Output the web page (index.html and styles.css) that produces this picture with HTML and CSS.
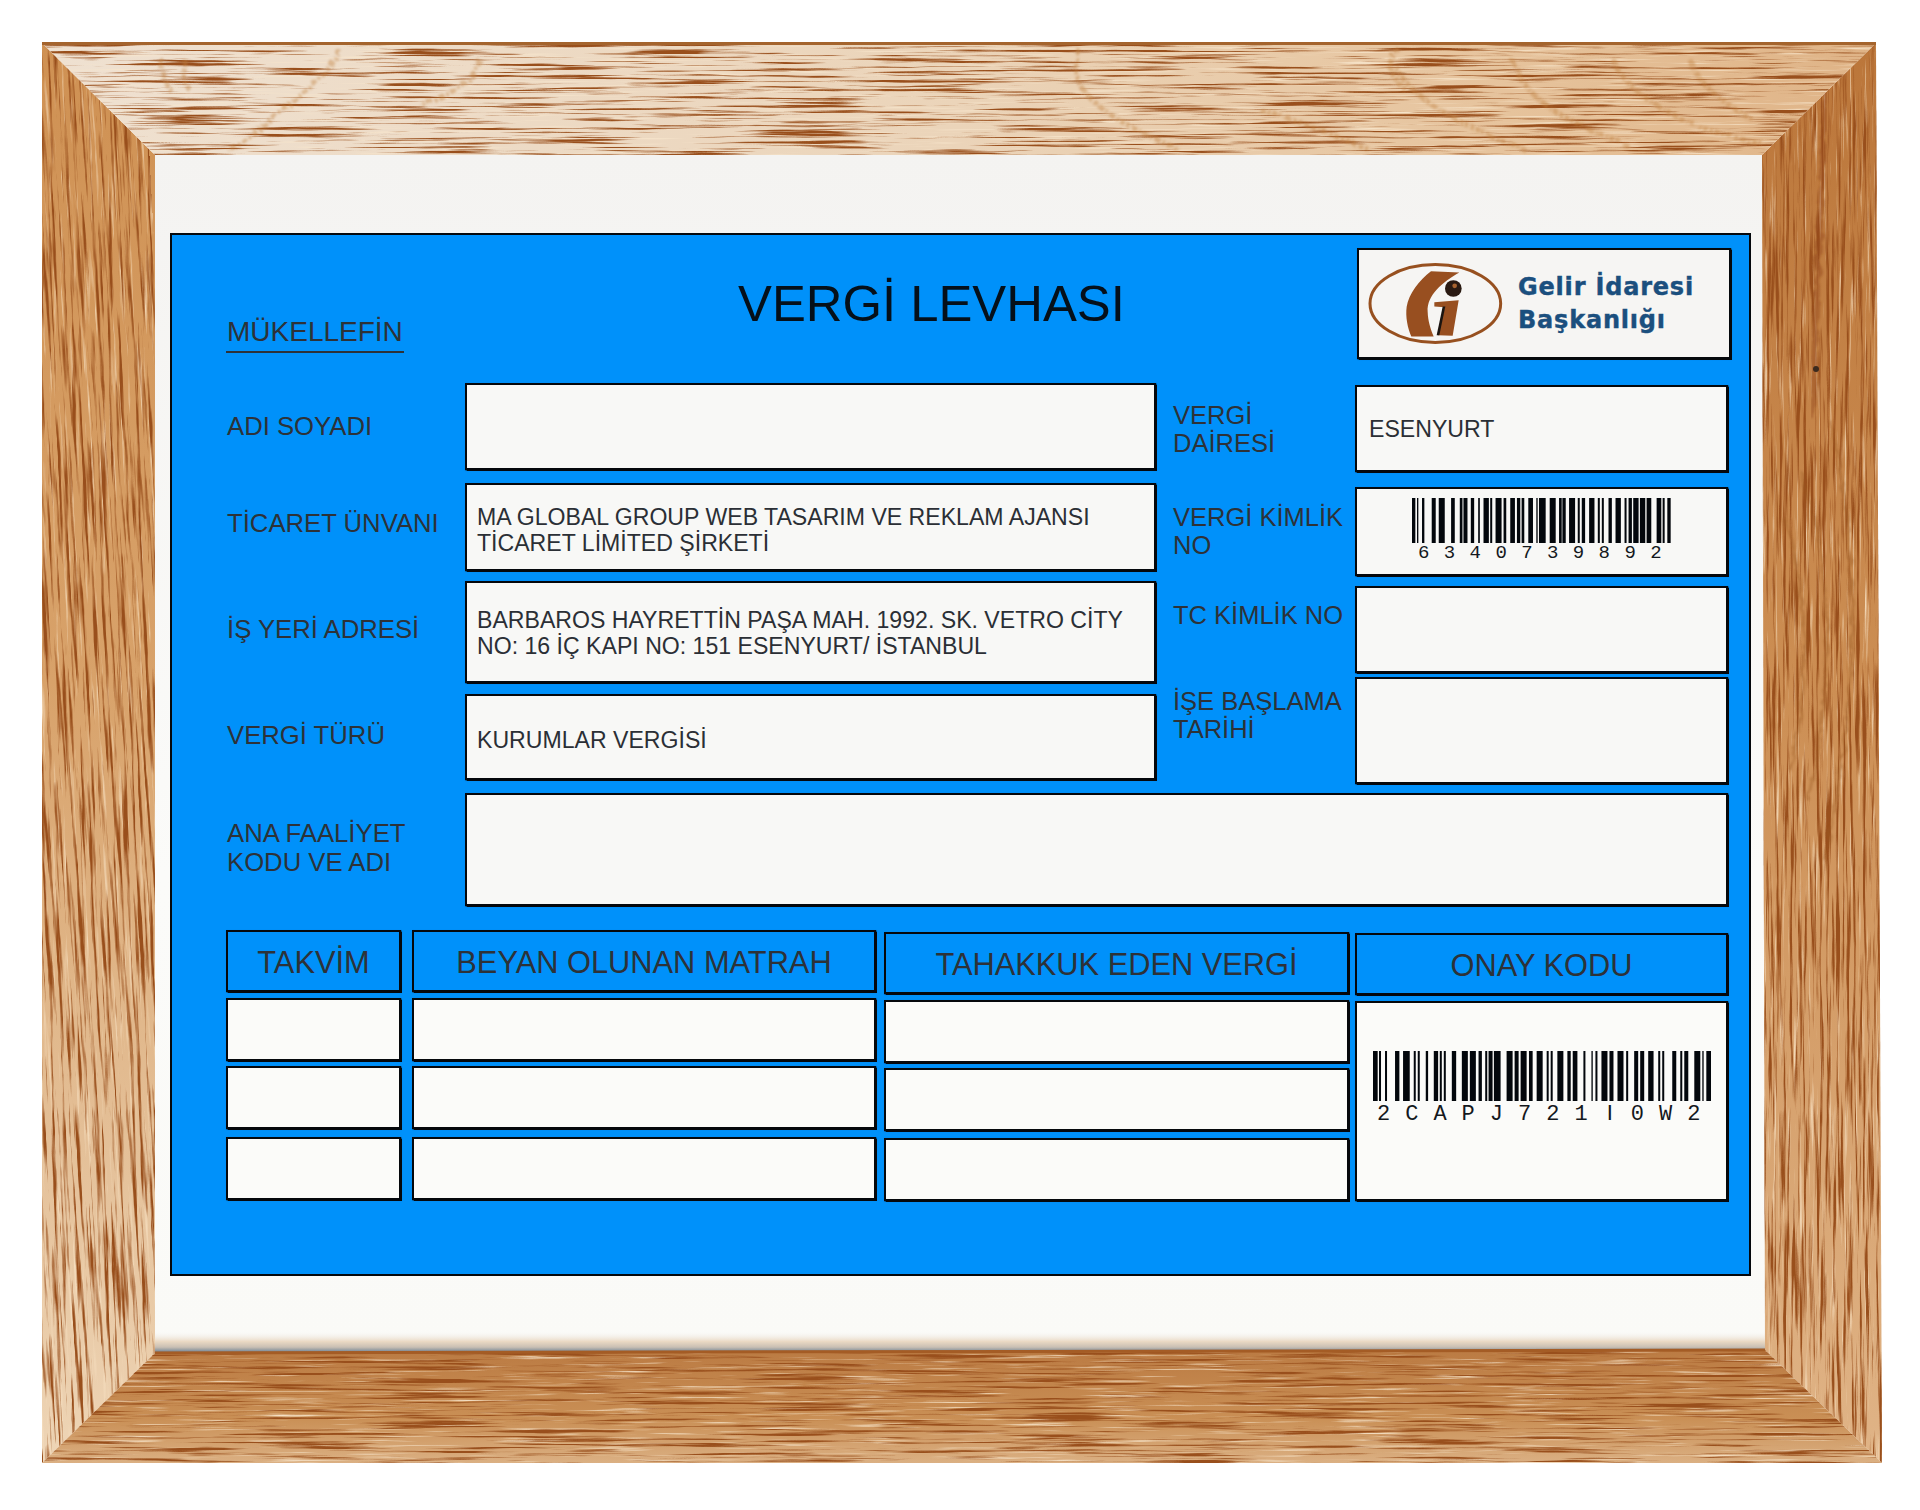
FILE: index.html
```html
<!DOCTYPE html>
<html lang="tr">
<head>
<meta charset="utf-8">
<title>Vergi Levhası</title>
<link rel="stylesheet" href="styles.css">
</head>
<body>
<div class="page">
  <div class="mat">
    <div class="panel">
      <div class="upper">
        <div class="left-col">
          <div class="left-head">
            <div class="owner">MÜKELLEFİN</div>
            <h1 class="title">VERGİ LEVHASI</h1>
          </div>
          <div class="form-row pitch-100">
            <div class="label">ADI SOYADI</div>
            <div class="box box-87"></div>
          </div>
          <div class="form-row pitch-98">
            <div class="label label-up">TİCARET ÜNVANI</div>
            <div class="box box-88 text-low">MA GLOBAL GROUP WEB TASARIM VE REKLAM AJANSI<br>TİCARET LİMİTED ŞİRKETİ</div>
          </div>
          <div class="form-row pitch-113">
            <div class="label label-tall">İŞ YERİ ADRESİ</div>
            <div class="box box-102 text-nudge">BARBAROS HAYRETTİN PAŞA MAH. 1992. SK. VETRO CİTY<br>NO: 16 İÇ KAPI NO: 151 ESENYURT/ İSTANBUL</div>
          </div>
          <div class="form-row">
            <div class="label label-mid">VERGİ TÜRÜ</div>
            <div class="box box-86 text-low">KURUMLAR VERGİSİ</div>
          </div>
        </div>
        <div class="right-col">
          <div class="logo-box">
            <svg class="logo-mark" viewBox="80 85 420 260" aria-hidden="true">
              <ellipse cx="288" cy="215" rx="196" ry="117" fill="none" stroke="#97501f" stroke-width="9"/>
              <path d="M275 118 L360 122 C310 150 262 190 265 240 C266 270 274 292 283 314 L216 314 C205 290 198 255 202 225 C208 185 240 145 275 118Z" fill="#984f20"/>
              <circle cx="342" cy="170" r="25" fill="#2a1a12"/>
              <circle cx="346" cy="162" r="7" fill="#a8632f"/>
              <path d="M285 211 L358 205 L340 312 L296 310 L316 226 L285 224Z" fill="#984f20"/>
              <path d="M310 224 L318 224 L300 310 L292 310Z" fill="#1b1410"/>
            </svg>
            <div class="logo-text">Gelir İdaresi<br>Başkanlığı</div>
          </div>
          <div class="side-row pitch-102">
            <div class="side-label">VERGİ<br>DAİRESİ</div>
            <div class="box box-87 side-box">ESENYURT</div>
          </div>
          <div class="side-row pitch-99">
            <div class="side-label">VERGİ KİMLİK NO</div>
            <div class="box box-89 barcode-box">
              <svg class="bars bars-tax" viewBox="218 0 775 135" preserveAspectRatio="none" aria-hidden="true">
                <path fill="#03070c" d="M218 0h10v135h-10zM233 0h4v135h-4zM248 0h7v135h-7zM277 0h12v135h-12zM298 0h18v135h-18zM335 0h11v135h-11zM361 0h8v135h-8zM372 0h12v135h-12zM394 0h10v135h-10zM416 0h5v135h-5zM432 0h16v135h-16zM452 0h6v135h-6zM468 0h18v135h-18zM492 0h8v135h-8zM512 0h14v135h-14zM532 0h10v135h-10zM546 0h8v135h-8zM566 0h14v135h-14zM590 0h4v135h-4zM598 0h20v135h-20zM630 0h18v135h-18zM658 0h8v135h-8zM668 0h10v135h-10zM688 0h18v135h-18zM714 0h6v135h-6zM726 0h10v135h-10zM748 0h16v135h-16zM774 0h6v135h-6zM786 0h6v135h-6zM806 0h10v135h-10zM827 0h16v135h-16zM854 0h6v135h-6zM866 0h10v135h-10zM880 0h16v135h-16zM900 0h16v135h-16zM920 0h14v135h-14zM950 0h14v135h-14zM968 0h6v135h-6zM982 0h10v135h-10z"/>
              </svg>
              <div class="code code-tax">6340739892</div>
            </div>
          </div>
          <div class="side-row pitch-91">
            <div class="side-label side-label-tight">TC KİMLİK NO</div>
            <div class="box box-87"></div>
          </div>
          <div class="side-row">
            <div class="side-label side-label-top">İŞE BAŞLAMA<br>TARİHİ</div>
            <div class="box box-107"></div>
          </div>
        </div>
      </div>
      <div class="activity">
        <div class="label label-top">ANA FAALİYET<br>KODU VE ADI</div>
        <div class="box box-wide"></div>
      </div>
      <div class="ledger">
        <div class="col col-date">
          <div class="head">TAKVİM</div>
          <div class="cells"><div class="cell"></div><div class="cell"></div><div class="cell"></div></div>
        </div>
        <div class="col col-base">
          <div class="head">BEYAN OLUNAN MATRAH</div>
          <div class="cells"><div class="cell"></div><div class="cell"></div><div class="cell"></div></div>
        </div>
        <div class="col col-tax">
          <div class="head">TAHAKKUK EDEN VERGİ</div>
          <div class="cells cells-tax"><div class="cell"></div><div class="cell"></div><div class="cell"></div></div>
        </div>
        <div class="col col-code">
          <div class="head">ONAY KODU</div>
          <div class="cell approval">
            <svg class="bars bars-approval" viewBox="100 0 1012 151" preserveAspectRatio="none" aria-hidden="true">
              <path fill="#03070c" d="M100 0h14v151h-14zM118 0h6v151h-6zM136 0h6v151h-6zM166 0h13v151h-13zM190 0h20v151h-20zM222 0h6v151h-6zM234 0h6v151h-6zM258 0h7v151h-7zM282 0h13v151h-13zM300 0h6v151h-6zM312 0h6v151h-6zM336 0h13v151h-13zM366 0h18v151h-18zM390 0h18v151h-18zM416 0h10v151h-10zM436 0h6v151h-6zM446 0h12v151h-12zM462 0h20v151h-20zM500 0h18v151h-18zM524 0h12v151h-12zM542 0h18v151h-18zM567 0h11v151h-11zM590 0h18v151h-18zM620 0h6v151h-6zM632 0h6v151h-6zM652 0h18v151h-18zM682 0h10v151h-10zM698 0h14v151h-14zM730 0h6v151h-6zM754 0h4v151h-4zM766 0h6v151h-6zM784 0h18v151h-18zM808 0h12v151h-12zM832 0h18v151h-18zM858 0h6v151h-6zM882 0h12v151h-12zM900 0h12v151h-12zM924 0h16v151h-16zM954 0h6v151h-6zM966 0h6v151h-6zM996 0h12v151h-12zM1020 0h6v151h-6zM1032 0h12v151h-12zM1062 0h18v151h-18zM1086 0h4v151h-4zM1098 0h14v151h-14z"/>
            </svg>
            <div class="code code-approval">2CAPJ721<span class="plain-i">I</span>0W2</div>
          </div>
        </div>
      </div>
    </div>
  </div>

  <svg class="wood" viewBox="0 0 1920 1510" aria-hidden="true">
    <defs>
      <filter id="grainH" x="0" y="0" width="100%" height="100%" color-interpolation-filters="sRGB">
        <feTurbulence type="fractalNoise" baseFrequency="0.008 0.36" numOctaves="4" seed="4"/>
        <feColorMatrix values="0 0 0 0 0.60  0 0 0 0 0.31  0 0 0 0 0.11  5 0 0 0 -2.6"/>
      </filter>
      <filter id="glowH" x="0" y="0" width="100%" height="100%" color-interpolation-filters="sRGB">
        <feTurbulence type="fractalNoise" baseFrequency="0.012 0.42" numOctaves="3" seed="11"/>
        <feColorMatrix values="0 0 0 0 0.97  0 0 0 0 0.90  0 0 0 0 0.80  0 3 0 0 -1.75"/>
      </filter>
      <filter id="grainV" x="0" y="0" width="100%" height="100%" color-interpolation-filters="sRGB">
        <feTurbulence type="fractalNoise" baseFrequency="0.3 0.009" numOctaves="4" seed="7"/>
        <feColorMatrix values="0 0 0 0 0.60  0 0 0 0 0.31  0 0 0 0 0.11  5 0 0 0 -2.5"/>
      </filter>
      <filter id="glowV" x="0" y="0" width="100%" height="100%" color-interpolation-filters="sRGB">
        <feTurbulence type="fractalNoise" baseFrequency="0.34 0.012" numOctaves="3" seed="19"/>
        <feColorMatrix values="0 0 0 0 0.97  0 0 0 0 0.88  0 0 0 0 0.76  0 3 0 0 -1.75"/>
      </filter>
      <filter id="wobble" x="-5%" y="-5%" width="110%" height="110%">
        <feTurbulence type="fractalNoise" baseFrequency="0.09" numOctaves="2" seed="2"/>
        <feDisplacementMap in="SourceGraphic" scale="8"/>
        <feGaussianBlur stdDeviation="0.8"/>
      </filter>
      <linearGradient id="topFill" x1="0" x2="1" y1="0" y2="0">
        <stop offset="0" stop-color="#efe1d1"/>
        <stop offset="0.5" stop-color="#ebd4b9"/>
        <stop offset="0.8" stop-color="#e6c39c"/>
        <stop offset="1" stop-color="#dfb386"/>
      </linearGradient>
      <linearGradient id="leftFill" x1="0" x2="0" y1="0" y2="1">
        <stop offset="0" stop-color="#cf9153"/>
        <stop offset="0.45" stop-color="#d8a26a"/>
        <stop offset="0.8" stop-color="#e5c29b"/>
        <stop offset="1" stop-color="#eed5b6"/>
      </linearGradient>
      <linearGradient id="rightFill" x1="0" x2="0" y1="0" y2="1">
        <stop offset="0" stop-color="#bb763a"/>
        <stop offset="0.45" stop-color="#cc8e53"/>
        <stop offset="1" stop-color="#e0b487"/>
      </linearGradient>
      <linearGradient id="bottomFill" x1="0" x2="0" y1="0" y2="1">
        <stop offset="0" stop-color="#bb7b43"/>
        <stop offset="0.6" stop-color="#c98f55"/>
        <stop offset="1" stop-color="#dbb083"/>
      </linearGradient>
      <linearGradient id="matShadow" x1="0" x2="0" y1="0" y2="1">
        <stop offset="0" stop-color="#f3f1ee" stop-opacity="0"/>
        <stop offset="0.45" stop-color="#ead9c4"/>
        <stop offset="0.72" stop-color="#c9bfb3"/>
        <stop offset="0.92" stop-color="#7f8d9a"/>
        <stop offset="1" stop-color="#9b5522"/>
      </linearGradient>
      <clipPath id="clipTop"><polygon points="42,43 1876,43 1762,155 155,155"/></clipPath>
      <clipPath id="clipLeft"><polygon points="42,43 155,155 155,1353 42,1463"/></clipPath>
      <clipPath id="clipRight"><polygon points="1876,43 1882,1463 1765,1350 1762,155"/></clipPath>
      <clipPath id="clipBottom"><polygon points="42,1463 155,1353 1765,1350 1882,1463"/></clipPath>
    </defs>

    <rect x="155" y="1332" width="1610" height="21" fill="url(#matShadow)"/>

    <polygon points="42,43 155,155 155,1353 42,1463" fill="url(#leftFill)"/>
    <g clip-path="url(#clipLeft)">
      <rect x="-20" y="20" width="200" height="1470" filter="url(#glowV)" transform="rotate(-3 80 750)"/>
      <rect x="-20" y="20" width="200" height="1470" filter="url(#grainV)" transform="rotate(-3 80 750)"/>
    </g>

    <polygon points="1876,43 1882,1463 1765,1350 1762,155" fill="url(#rightFill)"/>
    <g clip-path="url(#clipRight)">
      <rect x="1740" y="20" width="170" height="1470" filter="url(#glowV)"/>
      <rect x="1740" y="20" width="170" height="1470" filter="url(#grainV)"/>
      <path d="M1826 90C1820 220 1816 300 1812 420" fill="none" stroke="#94491a" stroke-width="6" opacity="0.5" filter="url(#wobble)"/>
      <path d="M1800 470C1830 560 1838 660 1808 800M1786 520C1808 600 1812 680 1790 770M1830 420C1862 560 1860 700 1824 860" fill="none" stroke="#9a5a24" stroke-width="3" opacity="0.4" filter="url(#wobble)"/>
      <circle cx="1816" cy="369" r="3" fill="#3b2a1e"/>
    </g>

    <polygon points="42,43 1876,43 1762,155 155,155" fill="url(#topFill)"/>
    <g clip-path="url(#clipTop)">
      <rect x="30" y="40" width="1860" height="120" filter="url(#glowH)"/>
      <rect x="30" y="40" width="1860" height="120" filter="url(#grainH)"/>
      <g fill="none" stroke="#c08040" stroke-width="5" stroke-dasharray="6 2 3 2" opacity="0.42" filter="url(#wobble)">
        <path d="M160 57C160 72 166 84 172 92M186 60C180 74 184 84 190 90"/>
        <path d="M340 50C330 72 306 92 280 112C262 130 246 140 228 150"/>
        <path d="M480 60C470 90 440 100 420 105M1080 50C1060 90 1110 120 1180 150"/>
        <path d="M1395 66C1412 98 1450 120 1525 150"/>
        <path d="M1513 60C1522 96 1560 120 1630 146"/>
        <path d="M1612 58C1628 96 1680 128 1764 144"/>
        <path d="M1690 60C1700 90 1730 105 1752 120"/>
        <path d="M1260 110C1300 120 1330 135 1370 150M1400 50C1380 60 1392 76 1405 90"/>
      </g>
    </g>
    <rect x="42" y="42" width="1834" height="3" fill="#a4642d"/>

    <polygon points="42,1463 155,1353 1765,1350 1882,1463" fill="url(#bottomFill)"/>
    <g clip-path="url(#clipBottom)">
      <rect x="30" y="1340" width="1860" height="130" filter="url(#glowH)"/>
      <rect x="30" y="1340" width="1860" height="130" filter="url(#grainH)"/>
    </g>
    <path d="M155 1353L1765 1350" fill="none" stroke="#a45c25" stroke-width="3"/>
  </svg>
</div>
</body>
</html>
```
FILE: styles.css
```css
* { box-sizing: border-box; }

body {
  margin: 0;
  background: #ffffff;
  font-family: "Liberation Sans", Arial, sans-serif;
}

.page {
  position: relative;
  width: 1920px;
  height: 1510px;
  padding: 155px 0 0 155px;
  overflow: hidden;
}

.wood {
  position: absolute;
  left: 0;
  top: 0;
  width: 1920px;
  height: 1510px;
  pointer-events: none;
}

.mat {
  width: 1610px;
  height: 1198px;
  padding: 78px 0 0 15px;
  background: linear-gradient(180deg, #f4f3f1 0%, #fbfbf9 60%, #fafaf7 100%);
}

.panel {
  width: 1581px;
  height: 1043px;
  padding: 0 0 0 55px;
  border: 2px solid #05080c;
  background: #0091fa;
  color: #2d3238;
}

/* upper area */
.upper {
  display: flex;
  height: 558px;
}

.left-col {
  width: 929px;
  flex: none;
}

.right-col {
  width: 555px;
  margin-left: 17px;
  flex: none;
}

.left-head {
  display: flex;
  height: 148px;
}

.owner {
  width: 178px;
  height: 37px;
  margin: 81px 0 0 -1px;
  padding-left: 1px;
  border-bottom: 2px solid #2d3238;
  font-size: 28px;
  line-height: 32px;
  white-space: nowrap;
}

.title {
  margin: 40px 0 0 334px;
  font-size: 50.8px;
  font-weight: 400;
  line-height: 58px;
  color: #05101a;
  white-space: nowrap;
}

.form-row {
  display: flex;
}

.pitch-100 { height: 100px; }
.pitch-98 { height: 98px; }
.pitch-113 { height: 113px; }
.pitch-102 { height: 102px; }
.pitch-99 { height: 99px; }
.pitch-91 { height: 91px; }

.label {
  display: flex;
  align-items: center;
  width: 238px;
  height: 87px;
  font-size: 25.7px;
  line-height: 29px;
  white-space: nowrap;
}

.label-up { padding-bottom: 6px; }
.label-mid { padding-bottom: 4px; }
.label-tall { height: 102px; padding-bottom: 6px; }

.label-top {
  align-items: flex-start;
  height: auto;
  padding-top: 26px;
}

.box {
  display: flex;
  flex-direction: column;
  justify-content: center;
  width: 691px;
  padding: 0 0 0 10px;
  border: 2px solid #05080c;
  box-shadow: 0 0 1px 0.5px #05080c;
  background: #f8f8f6;
  color: #2b2f35;
  font-size: 23.1px;
  line-height: 26px;
  white-space: nowrap;
}

.box-86 { height: 86px; }
.box-87 { height: 87px; }
.box-88 { height: 88px; }
.box-89 { height: 89px; }
.box-102 { height: 102px; }
.box-107 { height: 107px; }

.text-low { padding-top: 6px; }
.text-nudge { padding-top: 2px; }

/* right column */
.logo-box {
  display: flex;
  align-items: center;
  width: 374px;
  height: 111px;
  margin: 13px 0 26px 184px;
  padding-left: 7px;
  border: 2px solid #05080c;
  box-shadow: 0 0 1px 0.5px #05080c;
  background: #f6f5f3;
}

.logo-mark {
  width: 140px;
  height: 87px;
  flex: none;
}

.logo-text {
  margin-left: 12px;
  padding-top: 1px;
  color: #1b4f7e;
  font-family: "DejaVu Sans", sans-serif;
  font-size: 24px;
  font-weight: 700;
  line-height: 33px;
  letter-spacing: 0.8px;
  -webkit-text-stroke: 0.4px #1b4f7e;
  white-space: nowrap;
}

.side-row {
  display: flex;
}

.side-label {
  width: 182px;
  padding-top: 16px;
  font-size: 25.5px;
  line-height: 28px;
}

.side-label-tight { padding-top: 15px; }
.side-label-top { padding-top: 10px; }

.side-row .box {
  width: 373px;
  padding-left: 12px;
  flex: none;
}

.side-row .barcode-box {
  align-items: flex-start;
  justify-content: flex-start;
  padding: 9px 0 0 55px;
}

.bars {
  display: block;
  flex: none;
}

.bars-tax {
  width: 259px;
  height: 45px;
}

.code {
  font-family: "Liberation Mono", monospace;
  color: #14181d;
  white-space: nowrap;
}

.code-tax {
  margin: 0 0 0 6px;
  font-size: 19px;
  line-height: 20px;
  letter-spacing: 14.4px;
}

/* activity */
.activity {
  display: flex;
  height: 113px;
}

.box-wide {
  width: 1263px;
  height: 113px;
}

/* ledger */
.ledger {
  display: flex;
  margin: 24px 0 0 -1px;
}

.col {
  flex: none;
}

.col-date { width: 175px; margin-right: 11px; }
.col-base { width: 464px; margin-right: 8px; }
.col-tax { width: 465px; margin-right: 6px; padding-top: 2px; }
.col-code { width: 373px; padding-top: 3px; }

.head {
  display: flex;
  align-items: center;
  justify-content: center;
  height: 62px;
  margin-bottom: 6px;
  padding-top: 4px;
  border: 2px solid #05080c;
  box-shadow: 0 0 1px 0.5px #05080c;
  font-size: 30.8px;
  white-space: nowrap;
}

.cells {
  display: grid;
  grid-template-rows: 68px 71px 63px;
}

.cells-tax {
  grid-template-rows: 68px 70px 63px;
}

.cell {
  height: 63px;
  border: 2px solid #05080c;
  box-shadow: 0 0 1px 0.5px #05080c;
  background: #fbfbf9;
}

.approval {
  height: 200px;
  padding: 48px 0 0 16px;
}

.bars-approval {
  width: 338px;
  height: 50px;
}

.code-approval {
  margin: 1px 0 0 4px;
  font-size: 22px;
  line-height: 22px;
  letter-spacing: 15px;
}

.plain-i {
  font-family: "Liberation Sans", sans-serif;
  display: inline-block;
  width: 28.2px;
  padding-left: 4px;
  letter-spacing: 0;
}
```
